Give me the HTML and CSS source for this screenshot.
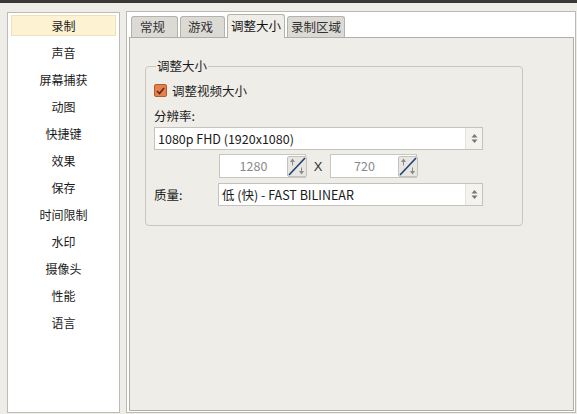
FILE: index.html
```html
<!doctype html>
<html>
    <head>
        <title>设置</title>
        <link rel="stylesheet" href="styles.css">
    </head>
    <body>
        <div class="topbar"></div>
        <div class="window">
            <ul class="nav">
                <li class="active">录制</li>
                <li>声音</li>
                <li>屏幕捕获</li>
                <li>动图</li>
                <li>快捷键</li>
                <li>效果</li>
                <li>保存</li>
                <li>时间限制</li>
                <li>水印</li>
                <li>摄像头</li>
                <li>性能</li>
                <li>语言</li>
            </ul>
            <div class="frame">
                <div class="tabs">
                    <span class="tab">常规</span>
                    <span class="tab">游戏</span>
                    <span class="tab selected">调整大小</span>
                    <span class="tab">录制区域</span>
                </div>
                <div class="pane">
                    <fieldset class="group">
                        <legend>调整大小</legend>
                        <label class="check">
                            <span class="box">
                                <svg width="9" height="8" viewBox="0 0 9 8"><path d="M1 4 L3.5 6.5 L8 1" fill="none" stroke="#5a2a10" stroke-width="1.6"/></svg>
                            </span>
                            调整视频大小
                        </label>
                        <div class="label">分辨率:</div>
                        <div class="combo">
                            <span class="text">1080p FHD (1920x1080)</span>
                            <span class="arrows">
                                <svg width="7" height="11" viewBox="0 0 7 11"><path d="M3.5 1 L6.5 4.5 L0.5 4.5 Z M0.5 6.5 L6.5 6.5 L3.5 10 Z" fill="#777"/></svg>
                            </span>
                        </div>
                        <div class="size-row">
                            <div class="spin">
                                <span class="num">1280</span>
                                <span class="spinbtn">
                                    <svg width="18" height="19" viewBox="0 0 18 19"><path d="M1 18 L17 1" stroke="#1f3f75" stroke-width="1.6"/><path d="M4.5 1.5 L2 5 L7 5 Z M4 5 L5 5 L5 8.5 L4 8.5 Z" fill="#8a8a8a"/><path d="M13.5 17.5 L11 14 L16 14 Z M13 10.5 L14 10.5 L14 14 L13 14 Z" fill="#8a8a8a"/></svg>
                                </span>
                            </div>
                            <span class="x">X</span>
                            <div class="spin">
                                <span class="num">720</span>
                                <span class="spinbtn">
                                    <svg width="18" height="19" viewBox="0 0 18 19"><path d="M1 18 L17 1" stroke="#1f3f75" stroke-width="1.6"/><path d="M4.5 1.5 L2 5 L7 5 Z M4 5 L5 5 L5 8.5 L4 8.5 Z" fill="#8a8a8a"/><path d="M13.5 17.5 L11 14 L16 14 Z M13 10.5 L14 10.5 L14 14 L13 14 Z" fill="#8a8a8a"/></svg>
                                </span>
                            </div>
                        </div>
                        <div class="quality-row">
                            <span class="label q">质量:</span>
                            <div class="combo">
                                <span class="text">低 (快) - FAST BILINEAR</span>
                                <span class="arrows">
                                    <svg width="7" height="11" viewBox="0 0 7 11"><path d="M3.5 1 L6.5 4.5 L0.5 4.5 Z M0.5 6.5 L6.5 6.5 L3.5 10 Z" fill="#777"/></svg>
                                </span>
                            </div>
                        </div>
                    </fieldset>
                </div>
            </div>
        </div>
    </body>
</html>
```

FILE: styles.css
```css
html, body {
    margin: 0;
    height: 100%;
}
body {
    background: #efede8;
    font-family: "Noto Sans CJK SC", "Noto Sans", sans-serif;
    font-size: 12px;
    color: #1a1a1a;
    overflow: hidden;
}
.topbar {
    height: 3px;
    background: #3a3835;
}
.window {
    display: flex;
    box-sizing: border-box;
    padding: 8px 1px 1px 7px;
    gap: 6px;
    height: 411px;
}
.nav {
    list-style: none;
    margin: 1px 0 0;
    padding: 2px 3px;
    width: 105px;
    background: #fff;
    border: 1px solid #bdbbb6;
}
.nav li {
    height: 21px;
    line-height: 21px;
    margin-bottom: 6px;
    text-align: center;
}
.nav li.active {
    background: #fdf3d2;
    border: 1px solid #efe2b8;
    height: 19px;
    line-height: 19px;
}
.frame {
    flex: 1;
    display: flex;
    flex-direction: column;
    border: 1px solid #bcbab4;
    background: #fff;
    padding: 0 1px 1px 2px;
}
.tabs {
    display: flex;
    align-items: flex-end;
    height: 25px;
    padding-left: 2px;
    gap: 2px;
}
.tab {
    height: 20px;
    line-height: 20px;
    padding: 0 3px;
    background: #dcdad5;
    border: 1px solid #b4b2ac;
    border-bottom: none;
    border-radius: 3px 3px 0 0;
    color: #333;
    font-size: 12.5px;
}
.tab:nth-child(1) {
    width: 29px;
    padding: 0 8px;
}
.tab:nth-child(2) {
    width: 29px;
    padding: 0 7px;
}
.tab.selected {
    background: #efede8;
    height: 23px;
    line-height: 22px;
    color: #111;
    position: relative;
    top: 1px;
    z-index: 1;
}
.pane {
    flex: 1;
    background: #efede8;
    border: 1px solid #b0aea8;
    padding: 21px 50px 0 15px;
}
.group {
    margin: 0;
    border: 1px solid #c8c6c0;
    border-radius: 4px;
    padding: 8px 39px 19px 8px;
}
.group legend {
    padding: 0 1px;
    margin-left: 2px;
    font-size: 12.5px;
    line-height: 14px;
}
.check {
    display: flex;
    align-items: center;
    gap: 5px;
    height: 19px;
    font-size: 12.5px;
}
.box {
    width: 11px;
    height: 11px;
    border: 1px solid #b85a30;
    border-radius: 2px;
    background: #e5804f;
    display: flex;
    align-items: center;
    justify-content: center;
}
.label {
    margin-top: 8px;
    height: 16px;
    line-height: 16px;
    font-size: 12.5px;
}
.combo {
    flex: 1;
    display: flex;
    height: 21px;
    background: #fff;
    border: 1px solid #c4c2bc;
    margin-top: 3px;
}
.quality-row .combo {
    margin-top: 0;
}
.combo .text {
    flex: 1;
    line-height: 21px;
    padding-left: 3px;
    font-size: 12.5px;
}
.combo .arrows {
    width: 16px;
    border-left: 1px solid #e4e2dc;
    background: #f4f3f0;
    display: flex;
    align-items: center;
    justify-content: center;
}
.size-row {
    display: flex;
    align-items: center;
    margin: 4px 0 0 65px;
    height: 24px;
}
.spin {
    width: 85px;
    height: 22px;
    display: flex;
    align-items: center;
    background: #fff;
    border: 1px solid #c8c6c0;
}
.spin .num {
    flex: 1;
    text-align: center;
    line-height: 22px;
    color: #8a8a8a;
    font-size: 12.5px;
}
.spinbtn {
    width: 20px;
    height: 21px;
    margin-right: -2px;
    background: #e8e6e1;
    border: 1px solid #c4c2bc;
    border-radius: 2px;
    box-sizing: border-box;
    display: flex;
    align-items: center;
    justify-content: center;
}
.x {
    width: 24px;
    text-align: center;
    font-family: "Liberation Sans", sans-serif;
    font-size: 13px;
    color: #333;
}
.quality-row {
    display: flex;
    align-items: center;
    margin-top: 5px;
}
.label.q {
    width: 64px;
    margin: 0;
}
```
